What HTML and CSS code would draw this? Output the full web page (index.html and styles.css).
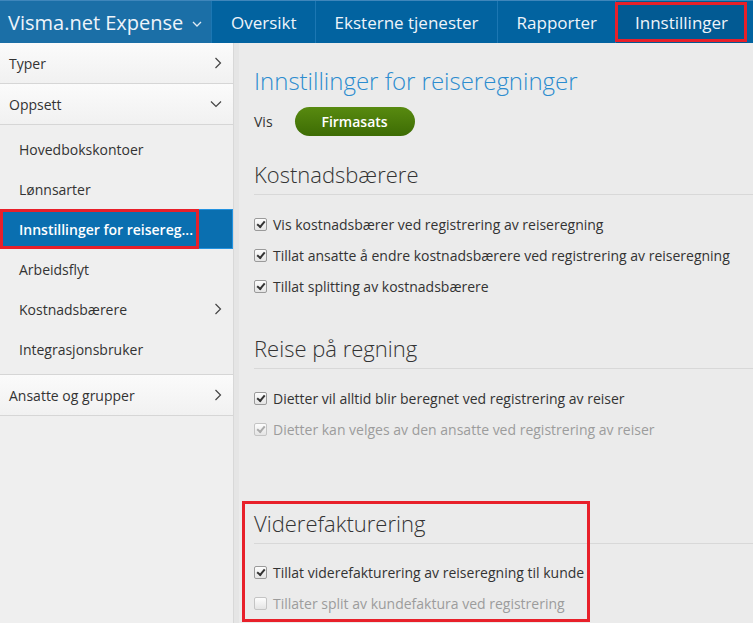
FILE: index.html
```html
<!DOCTYPE html>
<html lang="no">
<head>
    <meta charset="UTF-8">
    <meta name="viewport" content="width=device-width, initial-scale=1.0">
    <title>Visma.net Expense - Innstillinger</title>
    <link rel="stylesheet" href="styles.css">
</head>
<body>
<div class="topbar">
    <div class="brand">Visma.net Expense
        <svg class="caret" width="10" height="6" viewBox="0 0 10 6"><path d="M1 1l4 4 4-4" fill="none" stroke="#dfeaf4" stroke-width="1.3"/></svg>
    </div>
    <div class="navitem">Oversikt</div>
    <div class="navitem">Eksterne tjenester</div>
    <div class="navitem">Rapporter</div>
    <div class="navitem current">Innstillinger<span class="mark"></span></div>
</div>

<div class="wrap">
    <div class="sidebar">
        <div class="group">Typer
            <svg class="chev" width="8" height="12" viewBox="0 0 8 12"><path d="M1.5 1l5 5-5 5" fill="none" stroke="#444" stroke-width="1.2"/></svg>
        </div>
        <div class="group">Oppsett
            <svg class="chev" width="12" height="8" viewBox="0 0 12 8"><path d="M1 1.5l5 5 5-5" fill="none" stroke="#444" stroke-width="1.2"/></svg>
        </div>
        <div class="sublist">
            <div class="sub">Hovedbokskontoer</div>
            <div class="sub">Lønnsarter</div>
            <div class="sub active">Innstillinger for reisereg...<span class="mark"></span></div>
            <div class="sub">Arbeidsflyt</div>
            <div class="sub">Kostnadsbærere
                <svg class="chev" width="8" height="12" viewBox="0 0 8 12"><path d="M1.5 1l5 5-5 5" fill="none" stroke="#444" stroke-width="1.2"/></svg>
            </div>
            <div class="sub">Integrasjonsbruker</div>
        </div>
        <div class="group">Ansatte og grupper
            <svg class="chev" width="8" height="12" viewBox="0 0 8 12"><path d="M1.5 1l5 5-5 5" fill="none" stroke="#444" stroke-width="1.2"/></svg>
        </div>
    </div>

    <div class="content">
        <h1 class="title">Innstillinger for reiseregninger</h1>
        <div class="visrow">
            <span>Vis</span>
            <span class="pill">Firmasats</span>
        </div>

        <div class="section">
            <h2>Kostnadsbærere</h2>
            <div class="opt"><span class="box on"></span>Vis kostnadsbærer ved registrering av reiseregning</div>
            <div class="opt"><span class="box on"></span>Tillat ansatte å endre kostnadsbærere ved registrering av reiseregning</div>
            <div class="opt"><span class="box on"></span>Tillat splitting av kostnadsbærere</div>
        </div>

        <div class="section tall">
            <h2>Reise på regning</h2>
            <div class="opt"><span class="box on"></span>Dietter vil alltid blir beregnet ved registrering av reiser</div>
            <div class="opt off"><span class="box on"></span>Dietter kan velges av den ansatte ved registrering av reiser</div>
        </div>

        <div class="section last">
            <span class="mark"></span>
            <h2>Viderefakturering</h2>
            <div class="opt"><span class="box on"></span>Tillat viderefakturering av reiseregning til kunde</div>
            <div class="opt off"><span class="box"></span>Tillater split av kundefaktura ved registrering</div>
        </div>
    </div>
</div>
</body>
</html>
```

FILE: styles.css
```css
*{
    box-sizing: border-box;
}
body{
    margin: 0;
    font-family: "Open Sans", "Liberation Sans", sans-serif;
    background: #ebebeb;
    color: #333;
    height: 623px;
    overflow: hidden;
}
.topbar{
    display: flex;
    height: 43px;
    background: #0263a0;
    border-top: 1px solid #3f86bb;
    color: #eef4fa;
}
.brand{
    width: 211px;
    background: #1b6fa7;
    font-size: 20px;
    padding-left: 8px;
    display: flex;
    align-items: center;
    gap: 9px;
}
.caret{
    margin-top: 3px;
}
.navitem{
    position: relative;
    font-size: 17px;
    display: flex;
    align-items: center;
    padding: 0 18px 0 19px;
    border-left: 1px solid #1c77b3;
}
.navitem.current{
    background: #025a93;
    width: 132px;
    justify-content: center;
    padding: 0;
}
.mark{
    position: absolute;
    border: 3px solid #e8202a;
    pointer-events: none;
}
.navitem .mark{
    left: -1px;
    top: 1px;
    right: 0;
    bottom: 1px;
}

.wrap{
    display: flex;
    height: 580px;
}
.sidebar{
    width: 234px;
    background: #efefef;
    border-right: 1px solid #d8d8d8;
    font-size: 14px;
}
.group{
    height: 41px;
    display: flex;
    align-items: center;
    justify-content: space-between;
    padding: 0 11px 0 9px;
    background: linear-gradient(#fbfbfb, #f1f1f1);
    border-bottom: 1px solid #d6d6d6;
    color: #333;
}
.sublist{
    padding: 4px 0 5px;
    border-bottom: 1px solid #d6d6d6;
}
.sub{
    position: relative;
    height: 40px;
    display: flex;
    align-items: center;
    justify-content: space-between;
    padding: 0 11px 0 19px;
}
.sub.active{
    background: #0a6fb0;
    border: 1px solid #2493e0;
    border-left: none;
    color: #fff;
    font-weight: 600;
}
.sub .mark{
    left: 0;
    top: -1px;
    width: 199px;
    bottom: -1px;
}

.content{
    flex: 1;
    padding: 22px 0 0 15px;
    border-left: 5px solid #e5e5e5;
}
.title{
    margin: 0;
    font-size: 24px;
    font-weight: 300;
    line-height: 32px;
    color: #2c8ccf;
}
.visrow{
    display: flex;
    align-items: center;
    gap: 22px;
    margin-top: 10px;
    font-size: 14px;
}
.pill{
    width: 120px;
    height: 29px;
    border-radius: 15px;
    background: linear-gradient(#588a10, #3d6c04);
    color: #fff;
    font-weight: 600;
    display: flex;
    align-items: center;
    justify-content: center;
}
.section{
    position: relative;
    margin-top: 23px;
}
.section + .section{
    margin-top: 31px;
}
.section.tall{
    padding-bottom: 32px;
}
.section h2{
    margin: 0 0 14px;
    font-size: 22px;
    font-weight: 300;
    line-height: 30px;
    padding-bottom: 5px;
    border-bottom: 1px solid #d8d8d8;
    color: #333;
}
.section.last h2{
    margin-bottom: 13px;
}
.opt{
    height: 31px;
    display: flex;
    align-items: center;
    gap: 6px;
    font-size: 14px;
}
.opt.off{
    color: #9c9c9c;
}
.box{
    width: 13px;
    height: 13px;
    border: 1px solid #9a9a9a;
    border-radius: 2px;
    background: linear-gradient(#fdfdfd, #e4e4e4);
    display: flex;
    align-items: center;
    justify-content: center;
}
.box.on::after{
    content: "";
    width: 6px;
    height: 3px;
    border-left: 2px solid #333;
    border-bottom: 2px solid #333;
    transform: rotate(-50deg);
    margin-top: -2px;
}
.opt.off .box{
    border-color: #c4c4c4;
}
.opt.off .box.on::after{
    border-color: #aaa;
}
.section .mark{
    left: -12px;
    top: -7px;
    width: 348px;
    height: 121px;
}
```
